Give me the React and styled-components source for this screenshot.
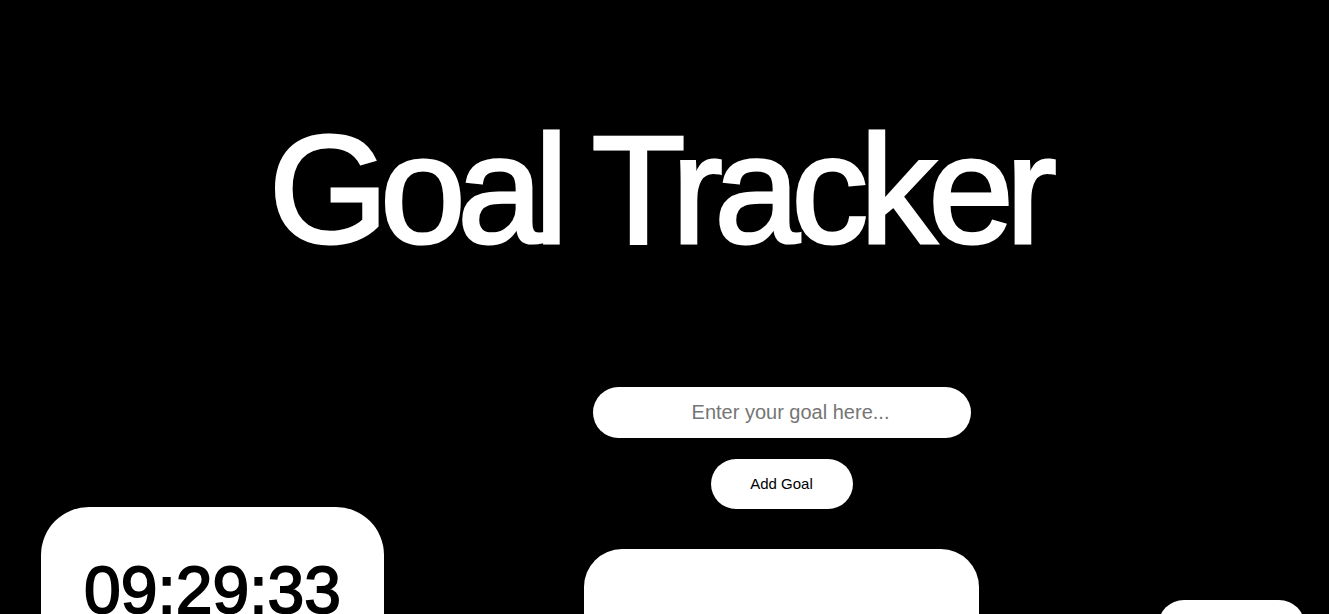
import React, { useState } from "react";
import styled, { createGlobalStyle } from "styled-components";

const GlobalStyle = createGlobalStyle`
  html, body {
    margin: 0;
    padding: 0;
    background: #000;
    overflow: hidden;
  }
  body {
    font-family: "Liberation Sans", Arial, sans-serif;
  }
`;

const App = () => {
  const [goal, setGoal] = useState("");

  return (
    <Page>
      <GlobalStyle />
      <Title>Goal Tracker</Title>

      <Board>
        <TimerColumn>
          <Card radius="48px" height="220px">
            <Clock>09:29:33</Clock>
          </Card>
        </TimerColumn>

        <GoalColumn>
          <GoalInput
            placeholder="Enter your goal here..."
            value={goal}
            onChange={(e) => setGoal(e.target.value)}
          />
          <AddButton onClick={() => setGoal("")}>Add Goal</AddButton>
          <Card radius="38px" height="260px" />
        </GoalColumn>

        <SideColumn>
          <Card radius="26px" height="120px" />
        </SideColumn>
      </Board>
    </Page>
  );
};
export default App;

const Page = styled.div`
  display: flex;
  flex-direction: column;
  align-items: center;
  padding-top: 113px;
  min-height: 100vh;
  background: #000;
`;

const Title = styled.h1`
  margin: 0;
  padding-right: 12px;
  color: #fff;
  font-family: "Liberation Sans", Arial, sans-serif;
  font-size: 154px;
  font-weight: 400;
  line-height: 1;
  letter-spacing: -8.5px;
  -webkit-text-stroke: 3px #fff;
`;

const Board = styled.div`
  display: flex;
  flex-direction: row;
  align-items: flex-start;
  align-self: stretch;
  margin-top: 120px;
  padding-left: 41px;
`;

const TimerColumn = styled.div`
  display: flex;
  flex-direction: column;
  width: 343px;
  padding-top: 120px;
`;

const GoalColumn = styled.div`
  display: flex;
  flex-direction: column;
  align-items: center;
  width: 395px;
  margin-left: 200px;
`;

const SideColumn = styled.div`
  display: flex;
  flex-direction: column;
  width: 147px;
  margin-left: 179px;
  padding-top: 213px;
`;

const Card = styled.div`
  display: flex;
  flex-direction: column;
  align-items: center;
  align-self: stretch;
  background: #fff;
  border-radius: ${(p) => p.radius};
  height: ${(p) => p.height};
`;

const Clock = styled.div`
  margin-top: 45px;
  color: #000;
  font-family: "Liberation Sans", Arial, sans-serif;
  font-size: 66px;
  font-weight: 400;
  letter-spacing: 0;
  -webkit-text-stroke: 1.8px #000;
`;

const GoalInput = styled.input`
  box-sizing: border-box;
  width: 378px;
  height: 51px;
  border: none;
  outline: none;
  border-radius: 26px;
  background: #fff;
  padding: 0 0 0 18px;
  text-align: center;
  font-family: "Liberation Sans", Arial, sans-serif;
  font-size: 20px;
  color: #000;

  &::placeholder {
    color: #757575;
  }
`;

const AddButton = styled.button`
  width: 142px;
  height: 50px;
  margin-top: 21px;
  margin-bottom: 40px;
  border: none;
  border-radius: 25px;
  background: #fff;
  color: #000;
  font-family: "Liberation Sans", Arial, sans-serif;
  font-size: 15px;
  padding: 0 0 2px;
  cursor: pointer;
`;
